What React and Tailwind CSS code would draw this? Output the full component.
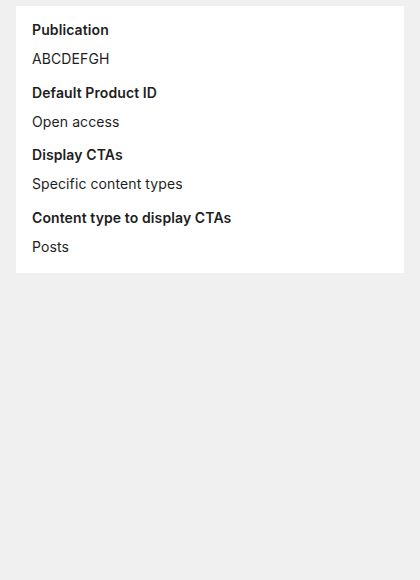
export default function App() {
  const items = [
    ["Publication", "ABCDEFGH"],
    ["Default Product ID", "Open access"],
    ["Display CTAs", "Specific content types"],
    ["Content type to display CTAs", "Posts"],
  ];
  return (
    <div className="min-h-[580px] bg-[#f0f0f0] pt-[6px] px-4" style={{ fontFamily: "Inter, 'Noto Sans', sans-serif" }}>
      <div className="bg-white px-4 pt-[14px] pb-[16px] flex flex-col gap-[13.5px]">
        {items.map(([t, v]) => (
          <div key={t} className="flex flex-col gap-[9px]">
            <div className="text-[14px] leading-[20px] font-semibold tracking-[0.1px] text-[#1e1e1e]">{t}</div>
            <div className="text-[14px] leading-[20px] tracking-[0.1px] text-[#1e1e1e]">{v}</div>
          </div>
        ))}
      </div>
    </div>
  );
}
